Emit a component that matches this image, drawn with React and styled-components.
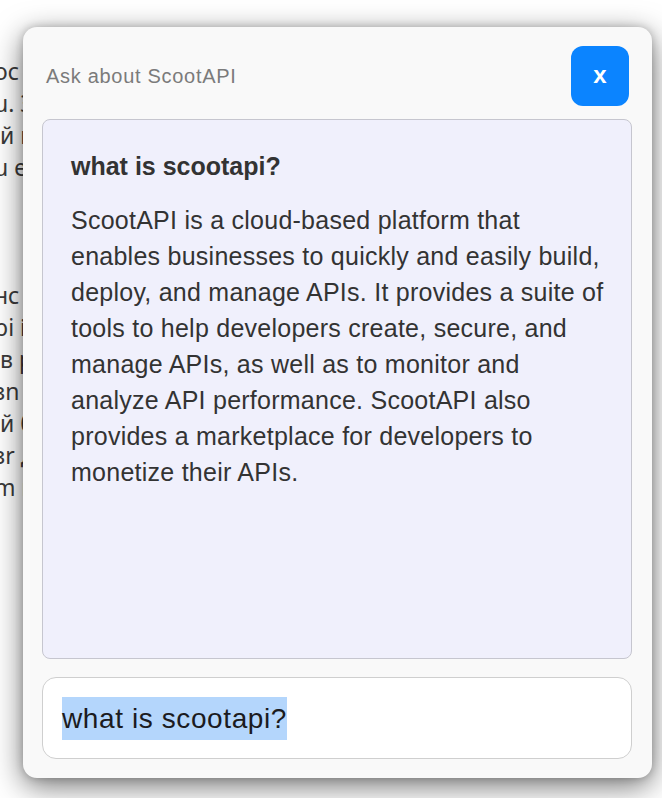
import React from "react";
import styled, { createGlobalStyle } from "styled-components";

const Global = createGlobalStyle`
  html, body { margin: 0; padding: 0; background: #ffffff; }
  body { width: 662px; height: 798px; overflow: hidden; font-family: "Liberation Sans", Arial, sans-serif; }
`;

const Page = styled.div`
  position: relative;
  width: 662px;
  height: 798px;
  overflow: hidden;
  background: #ffffff;
`;

const Backdrop = styled.div`
  padding-top: 55px;
  margin-left: -6px;
  font-family: "Noto Sans", sans-serif;
  font-size: 23px;
  line-height: 32px;
  color: #3a3a3a;
  white-space: nowrap;
`;

const BackPara = styled.p`
  margin: 0 0 ${(p) => p.$gap || 0}px 0;
`;

const Modal = styled.div`
  position: absolute;
  left: 23px;
  top: 27px;
  width: 629px;
  height: 751px;
  box-sizing: border-box;
  padding: 19px 20px 19px 19px;
  background: #f9f9f9;
  border-radius: 14px;
  box-shadow: 0 8px 30px rgba(0, 0, 0, 0.55), 0 0 8px rgba(0, 0, 0, 0.2);
  display: flex;
  flex-direction: column;
`;

const Header = styled.div`
  display: flex;
  align-items: center;
  justify-content: space-between;
  height: 60px;
  padding-left: 4px;
  margin-bottom: 13px;
`;

const Title = styled.div`
  font-size: 20px;
  letter-spacing: 0.7px;
  color: #7b7b7b;
`;

const CloseButton = styled.button`
  width: 58px;
  height: 60px;
  margin-right: 3px;
  border: none;
  border-radius: 12px;
  background: #0b84ff;
  color: #ffffff;
  font-family: "Liberation Sans", Arial, sans-serif;
  font-weight: bold;
  font-size: 24px;
  padding: 0 0 3px 0;
  display: flex;
  align-items: center;
  justify-content: center;
`;

const AnswerBox = styled.div`
  height: 540px;
  box-sizing: border-box;
  background: #f0f0fc;
  border: 1px solid #c6c6cf;
  border-radius: 8px;
  padding: 29px 20px 29px 28px;
  color: #333333;
`;

const Question = styled.div`
  font-size: 25px;
  font-weight: bold;
  line-height: 34px;
  margin-bottom: 19px;
`;

const Answer = styled.div`
  font-size: 25px;
  letter-spacing: 0.25px;
  line-height: 36px;
`;

const Line = styled.span`
  display: block;
  white-space: nowrap;
`;

const InputBox = styled.div`
  margin-top: 18px;
  height: 82px;
  box-sizing: border-box;
  background: #ffffff;
  border: 1px solid #cfcfcf;
  border-radius: 14px;
  padding: 0 19px;
  display: flex;
  align-items: center;
`;

const Selected = styled.span`
  background: #b4d6fc;
  color: #1b1b20;
  font-size: 28px;
  letter-spacing: 0.6px;
  line-height: 43px;
`;

const answerLines = [
  "ScootAPI is a cloud-based platform that",
  "enables businesses to quickly and easily build,",
  "deploy, and manage APIs. It provides a suite of",
  "tools to help developers create, secure, and",
  "manage APIs, as well as to monitor and",
  "analyze API performance. ScootAPI also",
  "provides a marketplace for developers to",
  "monetize their APIs.",
];

export default function App() {
  return (
    <Page>
      <Global />
      <Backdrop>
        <BackPara $gap={96}>
          ос обслуговування<br />
          u. Завдяки цьому<br />
          &nbsp;й користувачі<br />
          u ефективно
        </BackPara>
        <BackPara>
          нс розробки<br />
          pi інтерфейси<br />
          &nbsp;в реальному<br />
          зn налаштування<br />
          &nbsp;й безпечний<br />
          зr доступ<br />
          m платформи
        </BackPara>
      </Backdrop>
      <Modal>
        <Header>
          <Title>Ask about ScootAPI</Title>
          <CloseButton>x</CloseButton>
        </Header>
        <AnswerBox>
          <Question>what is scootapi?</Question>
          <Answer>
            {answerLines.map((l) => (
              <Line key={l}>{l}</Line>
            ))}
          </Answer>
        </AnswerBox>
        <InputBox>
          <Selected>what is scootapi?</Selected>
        </InputBox>
      </Modal>
    </Page>
  );
}
